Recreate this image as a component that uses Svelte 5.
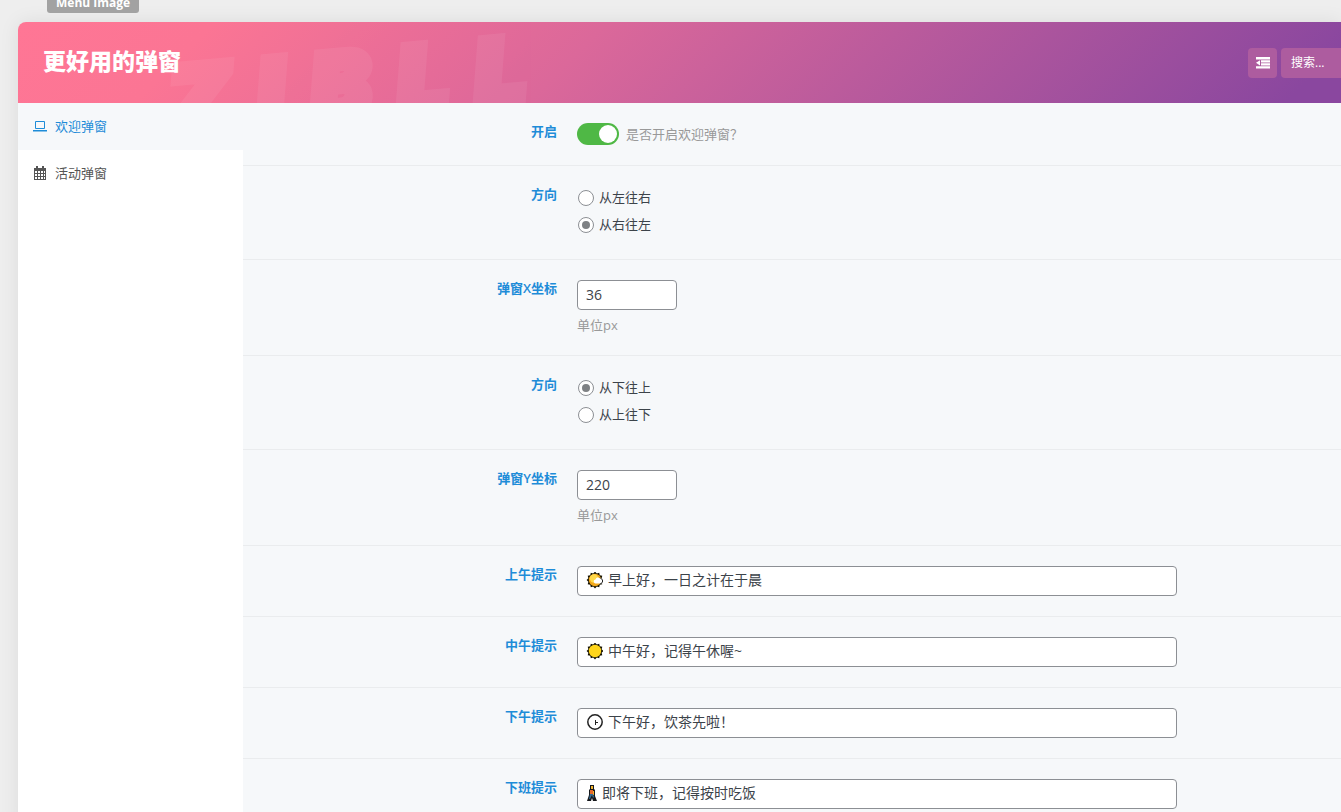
<script lang="ts">
	type Field = {
		id: string;
		title: string;
		type: 'switch' | 'radio' | 'number' | 'text';
		value?: string;
		options?: string[];
		desc?: string;
		icon?: 'cloudy' | 'sun' | 'clock' | 'walker';
	};

	const fields: Field[] = [
		{ id: 'enabled', title: '开启', type: 'switch', desc: '是否开启欢迎弹窗？' },
		{ id: 'dir-x', title: '方向', type: 'radio', options: ['从左往右', '从右往左'], value: '从右往左' },
		{ id: 'pos-x', title: '弹窗X坐标', type: 'number', value: '36', desc: '单位px' },
		{ id: 'dir-y', title: '方向', type: 'radio', options: ['从下往上', '从上往下'], value: '从下往上' },
		{ id: 'pos-y', title: '弹窗Y坐标', type: 'number', value: '220', desc: '单位px' },
		{ id: 'morning', title: '上午提示', type: 'text', icon: 'cloudy', value: '早上好，一日之计在于晨' },
		{ id: 'noon', title: '中午提示', type: 'text', icon: 'sun', value: '中午好，记得午休喔~' },
		{ id: 'afternoon', title: '下午提示', type: 'text', icon: 'clock', value: '下午好，饮茶先啦！' },
		{ id: 'off-work', title: '下班提示', type: 'text', icon: 'walker', value: '即将下班，记得按时吃饭' }
	];

	// 24-point star used for the sun's rays
	const rays = Array.from({ length: 24 }, (_, i) => {
		const r = i % 2 ? 6.8 : 8.4;
		const a = (i * Math.PI) / 12;
		return `${(8 + r * Math.cos(a)).toFixed(1)},${(8 + r * Math.sin(a)).toFixed(1)}`;
	}).join(' ');
</script>

<div class="topbar">
	<span class="badge">Menu Image</span>
</div>

<div class="panel">
	<header class="header">
		<div class="watermark" aria-hidden="true">
			<span>Z</span><span>I</span><span>B</span><span>L</span><span>L</span>
		</div>
		<h1>更好用的弹窗</h1>
		<div class="tools">
			<button class="expand" type="button" aria-label="展开">
				<svg width="14" height="12" viewBox="0 0 14 12" fill="#fff">
					<path d="M0 0h14v2.400H0zM5 3.200h9v2.200H5zM5 6.200h9v2.200H5zM0 9.200h14v2.400H0zM0 5.800 4 3.200v5.200z" />
				</svg>
			</button>
			<input class="search" type="text" placeholder="搜索..." aria-label="搜索" />
		</div>
	</header>

	<div class="body">
		<nav class="nav">
			<a href="#welcome" class="active">
				<svg width="14" height="14" viewBox="0 0 14 14">
					<path d="M2.500 2.500h9v7h-9z" fill="none" stroke="currentColor" />
					<path d="M0 11h14v1.500H0z" fill="currentColor" />
				</svg>
				欢迎弹窗
			</a>
			<a href="#activity">
				<svg width="14" height="14" viewBox="0 0 14 14">
					<path
						d="M1 2h2V0h2v2h4V0h2v2h2v12H1zM2 5v2h2V5zM5 5v2h2V5zM8 5v2h2V5zM11 5v2h1V5zM2 8v2h2V8zM5 8v2h2V8zM8 8v2h2V8zM11 8v2h1V8zM2 11v2h2v-2zM5 11v2h2v-2zM8 11v2h2v-2zM11 11v2h1v-2z"
						fill="currentColor"
						fill-rule="evenodd"
					/>
				</svg>
				活动弹窗
			</a>
		</nav>

		<main class="fields">
			{#each fields as field (field.id)}
				<div class="field">
					{#if field.type === 'radio'}
						<div class="title" id={field.id}>{field.title}</div>
						<div class="radios" role="radiogroup" aria-labelledby={field.id}>
							{#each field.options ?? [] as option}
								<label>
									<input type="radio" name={field.id} checked={option === field.value} />
									<span>{option}</span>
								</label>
							{/each}
						</div>
					{:else}
						<label class="title" for={field.id}>{field.title}</label>
						{#if field.type === 'switch'}
							<div class="switch-row">
								<input class="switch" id={field.id} type="checkbox" role="switch" checked />
								<span class="desc">{field.desc}</span>
							</div>
						{:else if field.type === 'number'}
							<div>
								<input class="number" id={field.id} type="text" value={field.value} />
								<div class="desc below">{field.desc}</div>
							</div>
						{:else}
							<div class="text-box">
								{#if field.icon === 'cloudy'}
									<svg width="17" height="17" viewBox="-1 0 17 17">
										<polygon points={rays} fill="#181400" />
										<circle cx="8" cy="8" r="6.200" fill="#f2a81c" />
										<circle cx="7" cy="6.500" r="4.200" fill="#ffd94a" />
										<path
											d="M9 11.500a2 2 0 0 1-.5-4 2.500 2.500 0 0 1 4.500-1 2.500 2.500 0 0 1 1.500 5z"
											fill="#fff"
										/>
										<path d="M13 5.500l2.500 2.500v2l-2 2" fill="none" stroke="#222" />
									</svg>
								{:else if field.icon === 'sun'}
									<svg width="17" height="17" viewBox="-1 0 17 17">
										<polygon points={rays} fill="#181400" />
										<circle cx="8" cy="8" r="6.200" fill="#ffd51a" />
									</svg>
								{:else if field.icon === 'clock'}
									<svg width="17" height="17" viewBox="-1 0 17 17">
										<circle cx="8" cy="8" r="7.200" fill="#fff" stroke="#222" stroke-width="1.500" />
										<path d="M8.500 6v5M8.500 8.500h2.500" fill="none" stroke="#222" />
									</svg>
								{:else}
									<svg width="11" height="17" viewBox="-1 0 11 17">
										<path d="M3 0h4v4l1 1v6l2 5H6l-1-3-1 3H0l2-6V5l1-1z" fill="#16181c" />
										<path d="M4 1h2v3H4z" fill="#f5b52c" />
										<path d="M3 5h3v4H3z" fill="#e4692d" />
										<path d="M6 6h1v4H6z" fill="#f5b52c" />
										<path d="M3 9h3l1 3-1 1-1-3-2 4H2z" fill="#356c96" />
									</svg>
								{/if}
								<input id={field.id} type="text" value={field.value} />
							</div>
						{/if}
					{/if}
				</div>
			{/each}
		</main>
	</div>
</div>

<style>
	:global(body) {
		background: #eeeeee;
		color: #3c434a;
		font-family: 'Open Sans', 'Noto Sans CJK SC', sans-serif;
		font-size: 13px;
		line-height: 20px;
		overflow: hidden;
	}

	input,
	button {
		box-sizing: border-box;
		margin: 0;
		font: inherit;
		color: inherit;
	}

	svg {
		display: block;
		flex: none;
	}

	.topbar {
		display: flex;
		align-items: flex-end;
		height: 13px;
		padding-left: 47px;
		overflow: hidden;
	}

	.badge {
		padding: 0 9px;
		border-radius: 3px;
		background: #a2a2a2;
		color: #fff;
		font-size: 12px;
		font-weight: 700;
	}

	.panel {
		margin: 9px 0 0 18px;
		border-radius: 8px 0 0 0;
		box-shadow: 0 0 20px rgba(0, 0, 0, 0.08);
		overflow: hidden;
	}

	.header {
		position: relative;
		display: flex;
		align-items: center;
		justify-content: space-between;
		height: 81px;
		padding-left: 25px;
		overflow: hidden;
		background: linear-gradient(135deg, #ff7695 0%, #fb7594 14%, #db689a 42%, #8a479f 96%);
	}

	.watermark {
		position: absolute;
		left: 150px;
		top: 18px;
		display: flex;
		gap: 28px;
		color: #fff;
		font: italic 900 88px/88px Inter, sans-serif;
		-webkit-text-stroke: 10px #fff;
		opacity: 0.06;
		transform: rotate(-5deg);
	}

	h1 {
		position: relative;
		margin: 0;
		padding-bottom: 4px;
		color: #fff;
		font-size: 23px;
		font-weight: 900;
		line-height: 32px;
	}

	.tools {
		display: flex;
		gap: 4px;
	}

	.expand,
	.search {
		height: 30px;
		border: 0;
		background: #ad5c9f;
		color: #fff;
	}

	.expand {
		display: grid;
		place-items: center;
		width: 29px;
		padding: 0;
		border-radius: 4px;
	}

	.search {
		width: 60px;
		padding: 0 0 0 10px;
		border-radius: 4px 0 0 4px;
		font-size: 12px;
	}

	.search::placeholder {
		color: #fff;
		opacity: 1;
	}

	.body {
		display: flex;
		background: #f6f8fa;
	}

	.nav {
		flex: none;
		width: 225px;
		background: #fff;
	}

	.nav a {
		box-sizing: border-box;
		display: flex;
		align-items: center;
		gap: 8px;
		height: 47px;
		padding: 0 0 2px 15px;
		color: #555;
		text-decoration: none;
	}

	.nav .active {
		background: #f6f8fa;
		color: #1e8cd8;
	}

	.fields {
		flex: 1;
		min-width: 0;
	}

	.field {
		display: grid;
		grid-template-columns: 314px minmax(0, 600px);
		column-gap: 20px;
		padding: 20px 0;
		border-bottom: 1px solid #eaecee;
	}

	.title {
		height: 16px;
		color: #1e8cd8;
		font-weight: 600;
		line-height: 16px;
		text-align: right;
	}

	.desc {
		color: #999;
	}

	.below {
		margin-top: 5px;
	}

	.switch-row {
		display: flex;
		align-items: center;
		gap: 7px;
		height: 22px;
	}

	.switch {
		appearance: none;
		width: 42px;
		height: 22px;
		padding: 2px;
		border-radius: 11px;
		background: #4fb845;
	}

	.switch::before {
		content: '';
		display: block;
		width: 18px;
		height: 18px;
		border-radius: 50%;
		background: #fff;
	}

	.switch:checked::before {
		margin-left: auto;
	}

	.radios {
		display: grid;
		row-gap: 1px;
	}

	.radios label {
		box-sizing: border-box;
		display: flex;
		align-items: center;
		gap: 5px;
		height: 26px;
		padding: 0 0 3px 1px;
	}

	.radios span {
		padding-bottom: 2px;
	}

	.radios input {
		appearance: none;
		display: grid;
		place-items: center;
		width: 16px;
		height: 16px;
		border: 1px solid #8c8f94;
		border-radius: 50%;
		background: #fff;
	}

	.radios input:checked::before {
		content: '';
		width: 8px;
		height: 8px;
		border-radius: 50%;
		background: #7e8184;
	}

	.number,
	.text-box {
		box-sizing: border-box;
		height: 30px;
		padding: 0 8px 2px;
		border: 1px solid #8c8f94;
		border-radius: 4px;
		background: #fff;
		font-size: 14px;
	}

	.number {
		display: block;
		width: 100px;
	}

	.text-box {
		display: flex;
		align-items: center;
		gap: 5px;
	}

	.text-box input {
		flex: 1;
		min-width: 0;
		height: 26px;
		padding: 0 0 2px;
		border: 0;
		background: transparent;
		outline: 0;
	}
</style>
